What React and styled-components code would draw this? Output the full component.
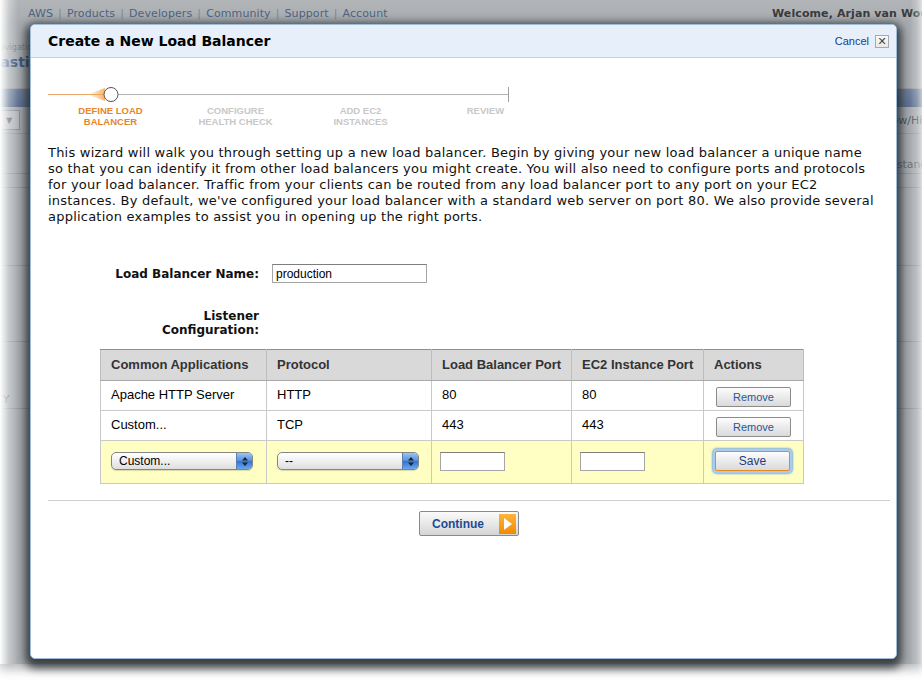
import React from 'react'
import styled, { createGlobalStyle } from 'styled-components'

const GlobalStyle = createGlobalStyle`
  html, body { margin: 0; padding: 0; background: #fff; }
  body { font-family: "DejaVu Sans", Verdana, sans-serif; }
  * { box-sizing: border-box; }
`

const Screen = styled.div`
  position: relative;
  width: 922px;
  height: 681px;
  overflow: hidden;
  background: #fff;
`

/* the dimmed console page behind the dialog */
const Backdrop = styled.div`
  position: relative;
  height: 664px;
  background: #a7acb0;
  box-shadow: 0 5px 10px rgba(90, 95, 100, 0.45);
  display: flex;
  flex-direction: column;
  overflow: hidden;
  &::before {
    content: '';
    position: absolute;
    inset: 0;
    z-index: 1;
    pointer-events: none;
    background: linear-gradient(
      to right,
      rgba(255, 255, 255, 1) 0,
      rgba(255, 255, 255, 0.35) 9px,
      rgba(255, 255, 255, 0) 18px,
      rgba(255, 255, 255, 0) calc(100% - 12px),
      rgba(255, 255, 255, 0.25) calc(100% - 5px),
      rgba(255, 255, 255, 0.6) 100%
    );
  }
`

const NavBar = styled.div`
  height: 27px;
  flex: none;
  display: flex;
  align-items: center;
  padding-left: 28px;
  background: linear-gradient(#b2b5b8, #a6aaae);
  font-size: 11px;
  letter-spacing: 0.1px;
  color: #4c6480;
  white-space: nowrap;
`

const NavSep = styled.span`
  color: #7d8893;
  margin: 0 5px;
`

const Welcome = styled.span`
  margin-left: auto;
  width: 150px;
  overflow: hidden;
  font-weight: bold;
  color: #3a3b3c;
`

const PageHead = styled.div`
  height: 62px;
  flex: none;
  padding: 16px 0 0 0;
  border-bottom: 1px solid #9a9ea2;
`

const Crumb = styled.div`
  font-size: 8px;
  color: #7d8186;
  margin-left: -6px;
`

const PageTitle = styled.div`
  font-size: 14px;
  font-weight: bold;
  color: #3d5b80;
  margin: 2px 0 0 -14px;
`

const BlueBand = styled.div`
  height: 18px;
  flex: none;
  background: linear-gradient(#6f819c, #5f7290);
`

const ToolRow = styled.div`
  height: 27px;
  flex: none;
  display: flex;
  align-items: center;
  justify-content: space-between;
  border-bottom: 1px solid #989ca0;
  font-size: 11px;
  color: #54585c;
`

const FakeDrop = styled.div`
  width: 22px;
  height: 20px;
  margin-left: -2px;
  border: 1px solid #8b8f93;
  background: #b4b8bc;
  display: flex;
  align-items: center;
  justify-content: center;
  font-size: 8px;
  color: #63676b;
`

const EdgeText = styled.span`
  white-space: nowrap;
  margin-right: ${p => p.mr || 0}px;
  margin-left: ${p => p.ml || 0}px;
`

const PageRow = styled.div`
  height: ${p => p.h}px;
  flex: none;
  border-bottom: 1px solid #94989c;
  font-size: 11px;
  color: #6b6f73;
  display: flex;
  align-items: flex-end;
  justify-content: ${p => (p.right ? 'flex-end' : 'flex-start')};
  padding-bottom: 2px;
`

/* dialog */
const Modal = styled.div`
  position: absolute;
  left: 30px;
  top: 24px;
  width: 867px;
  height: 635px;
  z-index: 2;
  background: #fff;
  border: 1px solid #9fbcd9;
  border-radius: 5px;
  box-shadow: 0 4px 9px 5px rgba(30, 33, 36, 0.78);
  overflow: hidden;
`

const Header = styled.div`
  height: 33px;
  display: flex;
  align-items: center;
  padding: 0 7px 0 17px;
  background: #e7f0fa;
  border-bottom: 1px solid #b9d3ec;
`

const Title = styled.h1`
  margin: 0;
  font-size: 14px;
  font-weight: bold;
  color: #000;
  flex: 1;
`

const Cancel = styled.a`
  font-family: "Liberation Sans", Arial, sans-serif;
  font-size: 11px;
  color: #1b3a87;
  margin-right: 6px;
  cursor: pointer;
`

const CloseBox = styled.span`
  width: 14px;
  height: 13px;
  border: 1px solid #a9a9a9;
  background: linear-gradient(#fafafa, #e8e8e8);
  display: flex;
  align-items: center;
  justify-content: center;
  font-family: "DejaVu Sans", sans-serif;
  font-size: 11px;
  line-height: 1;
  color: #444;
`

const Body = styled.div`
  padding: 0 6px 0 17px;
`

const Track = styled.div`
  margin-top: 28px;
`

const StepLabels = styled.div`
  display: grid;
  grid-template-columns: repeat(4, 125px);
  margin-top: 3px;
`

const StepLabel = styled.div`
  font-family: "Liberation Sans", Arial, sans-serif;
  font-weight: bold;
  font-size: 9.5px;
  line-height: 11px;
  text-align: center;
  color: ${p => (p.active ? '#e8852c' : '#c8c8c8')};
`

const Intro = styled.p`
  margin: 18px 0 0 0;
  font-size: 13px;
  line-height: 16px;
  letter-spacing: 0.22px;
  color: #111;
  white-space: nowrap;
`

const FieldRow = styled.div`
  display: grid;
  grid-template-columns: 211px 1fr;
  column-gap: 13px;
  align-items: center;
  margin-top: ${p => p.mt}px;
`

const FieldLabel = styled.label`
  text-align: right;
  font-size: 12px;
  font-weight: bold;
  line-height: 14px;
  color: #111;
`

const TextInput = styled.input`
  width: ${p => p.w}px;
  height: 19px;
  padding: 0 3px;
  border: 1px solid #a5a5a5;
  border-top-color: #7d7d7d;
  background: #fff;
  font-family: "Liberation Sans", Arial, sans-serif;
  font-size: 12px;
  color: #000;
  outline: none;
`

const Table = styled.table`
  margin: 12px 0 0 52px;
  width: 703px;
  border-collapse: collapse;
  border: 1px solid #8f8f8f;
  table-layout: fixed;
  font-family: "Liberation Sans", Arial, sans-serif;
  font-size: 13px;
`

const Th = styled.th`
  height: 31px;
  padding: 0 10px 2px;
  background: #d9d9d9;
  border: 1px solid #bdbdbd;
  border-top-color: #8f8f8f;
  border-bottom-color: #a9a9a9;
  text-align: left;
  font-weight: bold;
  color: #333;
  width: ${p => p.w}px;
  white-space: nowrap;
`

const Tr = styled.tr`
  background: ${p => (p.edit ? '#ffffc3' : '#fff')};
`

const Td = styled.td`
  height: ${p => (p.tall ? 43 : 30)}px;
  padding: 0 ${p => (p.tight ? 8 : 10)}px 2px;
  border: 1px solid #c9c9c9;
  color: #000;
  text-align: ${p => (p.center ? 'center' : 'left')};
  vertical-align: middle;
`

const SmallButton = styled.button`
  width: 75px;
  height: 20px;
  margin-top: 4px;
  padding: 0;
  border: 1px solid #8c8c8c;
  border-radius: 2px;
  background: linear-gradient(#fdfdfd, #e9e9e9 55%, #dadada);
  font-family: "Liberation Sans", Arial, sans-serif;
  font-size: 11px;
  color: #2a5597;
`

const SaveButton = styled(SmallButton)`
  margin: 0 2px 0 0;
  border-color: #e78a1e;
  color: #1d3d7d;
  font-size: 12px;
  box-shadow: 0 0 0 2px #a9cbef, 0 0 2px 3px #7eaedf;
`

const SelectBox = styled.div`
  width: 142px;
  height: 18px;
  border: 1px solid #858585;
  border-radius: 5px;
  background: linear-gradient(#ffffff, #f0f0f0 50%, #dedede);
  display: flex;
  align-items: center;
  overflow: hidden;
  font-family: "Liberation Sans", Arial, sans-serif;
  font-size: 12px;
  color: #000;
  box-shadow: 0 1px 1px rgba(0, 0, 0, 0.15);
`

const SelectText = styled.span`
  flex: 1;
  padding-left: 7px;
`

const SelectArrows = styled.span`
  width: 16px;
  align-self: stretch;
  background: linear-gradient(#9cc5f2, #4f8fe0 50%, #2f73d6 52%, #6aa6ee);
  border-left: 1px solid #5d7fae;
  display: flex;
  align-items: center;
  justify-content: center;
`

const ContinueRow = styled.div`
  display: flex;
  justify-content: center;
  margin-top: 10px;
`

const ContinueButton = styled.button`
  width: 100px;
  height: 25px;
  padding: 0 2px 0 12px;
  display: flex;
  align-items: center;
  justify-content: space-between;
  border: 1px solid #8a8a8a;
  border-radius: 2px;
  background: linear-gradient(#fbfbfb, #e6e6e6 55%, #d4d4d4);
  font-family: "Liberation Sans", Arial, sans-serif;
  font-weight: bold;
  font-size: 12px;
  color: #1c4a97;
`

const Divider = styled.hr`
  margin: 16px 0 0 0;
  width: 842px;
  border: 0;
  border-top: 1px solid #cfcfcf;
`

const Arrows = () => (
  <svg width="8" height="11" viewBox="0 0 8 11">
    <path d="M4 1 L7 4.5 H1 Z" fill="#222" />
    <path d="M4 10 L7 6.5 H1 Z" fill="#222" />
  </svg>
)

const Select = ({ value }) => (
  <SelectBox>
    <SelectText>{value}</SelectText>
    <SelectArrows>
      <Arrows />
    </SelectArrows>
  </SelectBox>
)

const PlayIcon = () => (
  <svg width="17" height="20" viewBox="0 0 17 20">
    <defs>
      <linearGradient id="og" x1="0" y1="0" x2="0" y2="1">
        <stop offset="0" stopColor="#ffb43a" />
        <stop offset="1" stopColor="#f28a00" />
      </linearGradient>
    </defs>
    <rect x="0" y="0" width="17" height="20" fill="url(#og)" />
    <path d="M5 4 L13 10 L5 16 Z" fill="#fff" />
  </svg>
)

const StepTrack = () => (
  <svg width="462" height="16" viewBox="0 0 462 16" style={{ display: 'block' }}>
    <defs>
      <linearGradient id="tail" x1="0" y1="0" x2="1" y2="0">
        <stop offset="0" stopColor="#f6a54c" stopOpacity="0" />
        <stop offset="1" stopColor="#f6a54c" stopOpacity="0.85" />
      </linearGradient>
    </defs>
    <line x1="0" y1="8.5" x2="56" y2="8.5" stroke="#eda66a" strokeWidth="1" />
    <path d="M40 8.5 L57 2 L57 15 Z" fill="url(#tail)" />
    <line x1="70" y1="8.5" x2="460" y2="8.5" stroke="#b4b4b4" strokeWidth="1" />
    <line x1="460.5" y1="1" x2="460.5" y2="16" stroke="#a0a0a0" strokeWidth="1" />
    <circle cx="63" cy="8.5" r="7" fill="#fff" stroke="#555" strokeWidth="1" />
  </svg>
)

const steps = [
  ['DEFINE LOAD', 'BALANCER'],
  ['CONFIGURE', 'HEALTH CHECK'],
  ['ADD EC2', 'INSTANCES'],
  ['REVIEW', ''],
]

const listeners = [
  { app: 'Apache HTTP Server', proto: 'HTTP', lb: '80', ec2: '80' },
  { app: 'Custom...', proto: 'TCP', lb: '443', ec2: '443' },
]

const navLinks = ['AWS', 'Products', 'Developers', 'Community', 'Support', 'Account']

export default function App() {
  return (
    <Screen>
      <GlobalStyle />
      <Backdrop>
        <NavBar>
          {navLinks.map((l, i) => (
            <React.Fragment key={l}>
              {i > 0 && <NavSep>|</NavSep>}
              <span>{l}</span>
            </React.Fragment>
          ))}
          <Welcome>Welcome, Arjan van Wouw</Welcome>
        </NavBar>
        <PageHead>
          <Crumb>Navigation</Crumb>
          <PageTitle>Elastic Load Balancing</PageTitle>
        </PageHead>
        <BlueBand />
        <ToolRow>
          <FakeDrop>▼</FakeDrop>
          <EdgeText mr={-14}>Show/Hide</EdgeText>
        </ToolRow>
        <PageRow h={40} right>
          <EdgeText mr={-17}>Instances</EdgeText>
        </PageRow>
        <PageRow h={14} />
        <PageRow h={78} />
        <PageRow h={76} />
        <PageRow h={67}>
          <EdgeText ml={-4}>TY</EdgeText>
        </PageRow>
      </Backdrop>

      <Modal>
        <Header>
          <Title>Create a New Load Balancer</Title>
          <Cancel>Cancel</Cancel>
          <CloseBox>✕</CloseBox>
        </Header>
        <Body>
          <Track>
            <StepTrack />
          </Track>
          <StepLabels>
            {steps.map(([a, b], i) => (
              <StepLabel key={a} active={i === 0}>
                {a}
                <br />
                {b}
              </StepLabel>
            ))}
          </StepLabels>

          <Intro>
            This wizard will walk you through setting up a new load balancer. Begin by giving your new load balancer a unique name
            <br />
            so that you can identify it from other load balancers you might create. You will also need to configure ports and protocols
            <br />
            for your load balancer. Traffic from your clients can be routed from any load balancer port to any port on your EC2
            <br />
            instances. By default, we've configured your load balancer with a standard web server on port 80. We also provide several
            <br />
            application examples to assist you in opening up the right ports.
          </Intro>

          <FieldRow mt={39}>
            <FieldLabel>Load Balancer Name:</FieldLabel>
            <TextInput w={155} defaultValue="production" />
          </FieldRow>
          <FieldRow mt={26}>
            <FieldLabel>
              Listener
              <br />
              Configuration:
            </FieldLabel>
            <span />
          </FieldRow>

          <Table>
            <thead>
              <tr>
                <Th w={166}>Common Applications</Th>
                <Th w={165}>Protocol</Th>
                <Th w={140}>Load Balancer Port</Th>
                <Th w={132}>EC2 Instance Port</Th>
                <Th w={100}>Actions</Th>
              </tr>
            </thead>
            <tbody>
              {listeners.map(r => (
                <Tr key={r.lb}>
                  <Td>{r.app}</Td>
                  <Td>{r.proto}</Td>
                  <Td>{r.lb}</Td>
                  <Td>{r.ec2}</Td>
                  <Td center>
                    <SmallButton>Remove</SmallButton>
                  </Td>
                </Tr>
              ))}
              <Tr edit>
                <Td tall>
                  <Select value="Custom..." />
                </Td>
                <Td tall>
                  <Select value="--" />
                </Td>
                <Td tall tight>
                  <TextInput w={65} />
                </Td>
                <Td tall tight>
                  <TextInput w={65} />
                </Td>
                <Td tall center>
                  <SaveButton>Save</SaveButton>
                </Td>
              </Tr>
            </tbody>
          </Table>

          <Divider />
          <ContinueRow>
            <ContinueButton>
              Continue
              <PlayIcon />
            </ContinueButton>
          </ContinueRow>
        </Body>
      </Modal>
    </Screen>
  )
}
